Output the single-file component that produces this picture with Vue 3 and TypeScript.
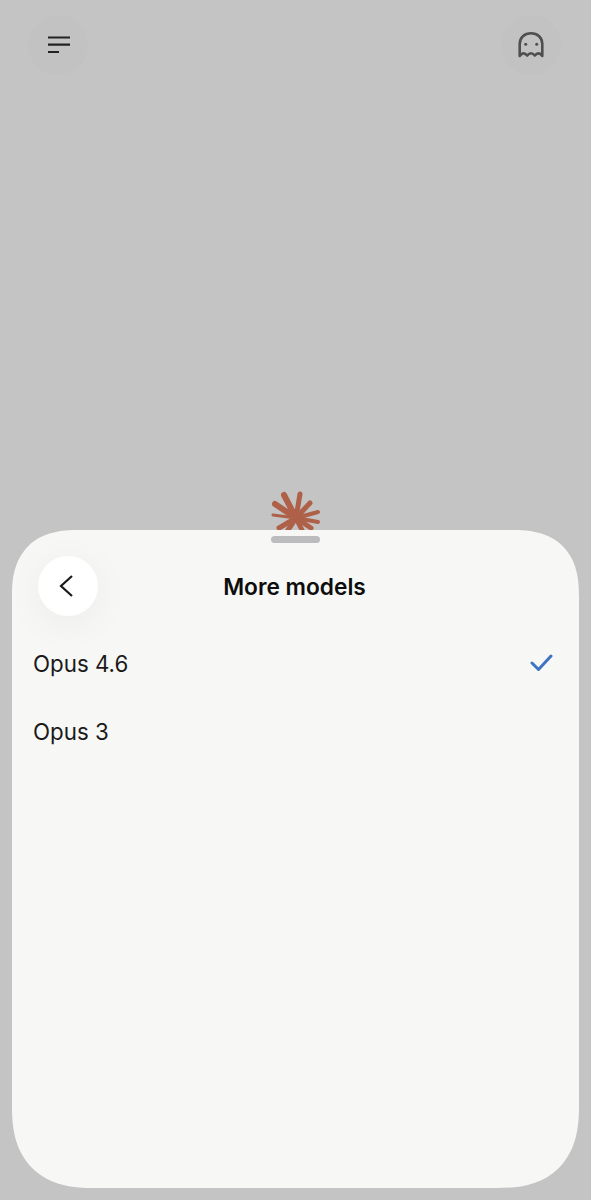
<script setup lang="ts">
interface Model {
  name: string
  selected: boolean
}

const models: Model[] = [
  { name: 'Opus 4.6', selected: true },
  { name: 'Opus 3', selected: false },
]

// ray end points of the spark, relative to its centre, plus stroke width
const rays: [number, number, number][] = [
  [-12, -23, 6],
  [4, -24, 5],
  [14, -15, 5],
  [22, -6, 4],
  [22, 4, 4],
  [-21, -14, 6],
  [-23, -3, 3],
  [-17, 10, 5],
  [-8, 12, 5],
  [6, 12, 5],
  [15, 10, 5],
]
</script>

<template>
  <div class="page">
    <header class="topbar">
      <button class="round-btn" aria-label="Menu">
        <svg width="24" height="18" viewBox="0 0 24 18" fill="none" stroke="#222" stroke-width="2.2">
          <path d="M2 1.500H24M2 8.700H24M2 16H13" />
        </svg>
      </button>
      <button class="round-btn" aria-label="Incognito">
        <svg width="28" height="28" viewBox="0 0 28 28" fill="none" stroke="#4f4f4f" stroke-width="2.600" stroke-linejoin="round">
          <path d="M2.700 25V13C2.700 6.500 7.500 2.300 14 2.300S25.300 6.500 25.300 13V25Q21.500 20 17.800 24.500 14 20 10.200 24.500 6.500 20 2.700 25Z" />
          <circle cx="8.700" cy="13.300" r="1.500" fill="#4f4f4f" stroke="none" />
          <circle cx="19.700" cy="13.300" r="1.500" fill="#4f4f4f" stroke="none" />
        </svg>
      </button>
    </header>

    <div class="stage">
      <svg class="spark" width="56" height="46" viewBox="-28 -30 56 46">
        <line
          v-for="(ray, i) in rays"
          :key="i"
          x1="0"
          y1="0"
          :x2="ray[0]"
          :y2="ray[1]"
          :stroke-width="ray[2]"
        />
      </svg>
    </div>

    <section class="sheet">
      <div class="handle" />
      <div class="sheet-head">
        <button class="back-btn" aria-label="Back">
          <svg width="16" height="24" viewBox="0 0 16 24" fill="none" stroke="#1a1a1a" stroke-width="2.200">
            <path d="M13 2 2 12 13 22" />
          </svg>
        </button>
        <h2 class="sheet-title">More models</h2>
      </div>
      <ul class="model-list">
        <li v-for="m in models" :key="m.name" class="model-row">
          <span>{{ m.name }}</span>
          <svg v-if="m.selected" width="24" height="20" viewBox="0 0 24 20" fill="none" stroke="#3f74c4" stroke-width="3" stroke-linecap="round" stroke-linejoin="round">
            <path d="M2 10 8.500 16.500 21 3" />
          </svg>
        </li>
      </ul>
    </section>
  </div>
</template>

<style scoped>
.page {
  display: flex;
  flex-direction: column;
  width: 591px;
  height: 1200px;
  overflow: hidden;
  background: #c4c4c4;
  font-family: Inter, "Liberation Sans", sans-serif;
}

.topbar {
  display: flex;
  justify-content: space-between;
  padding: 15px 30px 0 28px;
}

.round-btn {
  display: flex;
  align-items: center;
  justify-content: center;
  width: 60px;
  height: 60px;
  padding: 0;
  border: 0;
  border-radius: 50%;
  background: #c2c2c2;
}

.stage {
  flex: 1;
  display: flex;
  justify-content: center;
  align-items: flex-end;
}

.spark {
  display: block;
  margin: 0 0 -4px 0;
}

.spark line {
  stroke: #ae6148;
  stroke-linecap: round;
}

.sheet {
  position: relative;
  flex: none;
  display: flex;
  flex-direction: column;
  height: 658px;
  margin: 0 12px 12px;
  border-radius: 66px 66px 82px 82px;
  corner-shape: superellipse(1.3);
  background: #f7f7f6;
}

.handle {
  align-self: center;
  width: 49px;
  height: 7px;
  margin-top: 6px;
  border-radius: 4px;
  background: #bcbcbe;
}

.sheet-head {
  position: relative;
  display: flex;
  justify-content: center;
  align-items: center;
  height: 60px;
  margin-top: 13px;
  padding-right: 2px;
}

.back-btn {
  position: absolute;
  left: 26px;
  top: 0;
  display: flex;
  align-items: center;
  justify-content: center;
  width: 60px;
  height: 60px;
  padding: 0 3px 0 0;
  border: 0;
  border-radius: 50%;
  background: #fff;
  box-shadow: 0 8px 40px rgba(0, 0, 0, 0.05);
}

.sheet-title {
  margin: 0;
  font-size: 22.700px;
  font-weight: 600;
  color: #0d0d0d;
}

.model-list {
  margin: 13px 0 0;
  padding: 0;
  list-style: none;
}

.model-row {
  display: flex;
  align-items: center;
  justify-content: space-between;
  height: 68px;
  padding: 0 25px 0 21px;
  font-size: 22.300px;
  color: #1a1a1a;
}
</style>

<style>
html,
body {
  margin: 0;
  background: #c4c4c4;
}
</style>
